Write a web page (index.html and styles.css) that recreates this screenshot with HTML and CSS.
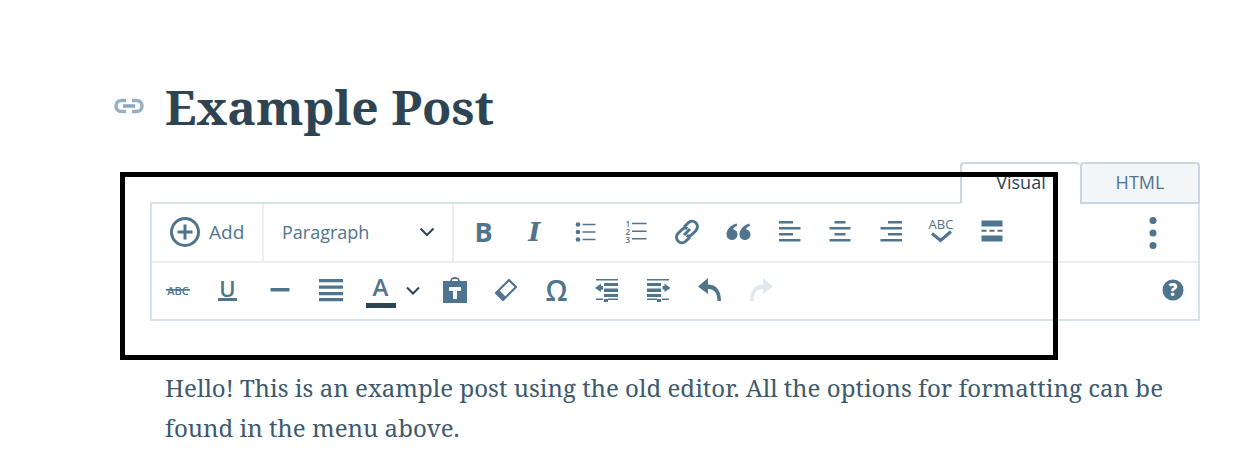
FILE: index.html
```html
<!DOCTYPE html>
<html lang="en">
<head>
<meta charset="utf-8">
<title>Example Post</title>
<link rel="stylesheet" href="styles.css">
</head>
<body>
<main class="page">
  <div class="title-row">
    <svg class="permalink" viewBox="0 0 32 24" width="32" height="24"><path d="M10 12h12" fill="none" stroke="#87a6bc" stroke-width="3.500"/><path d="M13 6.500H8.500a5.500 5.500 0 0 0 0 11H13M19 6.500h4.500a5.500 5.500 0 0 1 0 11H19" fill="none" stroke="#94b0c5" stroke-width="3.500"/></svg>
    <h1 class="title">Example Post</h1>
  </div>
  <div class="tabs">
    <div class="tab tab-active">Visual</div>
    <div class="tab tab-html">HTML</div>
  </div>
  <div class="editor">
    <div class="row row-first">
      <div class="add">
        <svg viewBox="0 0 32 32" width="32" height="32"><circle cx="16" cy="16" r="13.500" fill="none" stroke="#4f748e" stroke-width="3"/><path d="M16 8.500v15M8.500 16h15" stroke="#4f748e" stroke-width="3"/></svg>
        <span>Add</span>
      </div>
      <div class="format">
        <span>Paragraph</span>
        <svg class="chev-dark" viewBox="0 0 16 10" width="16" height="10"><path d="M1.500 1.500 8 8l6.500-6.500" fill="none" stroke="#2e4453" stroke-width="2"/></svg>
      </div>
      <div class="icons">
        <div class="btn"><span class="glyph-b">B</span></div>
        <div class="btn"><span class="glyph-i">I</span></div>
        <div class="btn"><svg class="ico" viewBox="0 0 24 24"><circle cx="5" cy="4.500" r="2.300"/><circle cx="5" cy="12" r="2.300"/><circle cx="5" cy="19.500" r="2.300"/><path d="M9.500 3.800h13v1.400h-13zM9.500 11.300h13v1.400h-13zM9.500 18.800h13v1.400h-13z"/></svg></div>
        <div class="btn"><svg class="ico ico-ol" viewBox="0 0 24 26"><text class="nums" x="1.500" y="7.500">1</text><text class="nums" x="1.500" y="15.500">2</text><text class="nums" x="1.500" y="23.500">3</text><path d="M8 3.800h14.500v1.400H8zM8 11.500h14.500v1.400H8zM8 19h14.500v1.400H8z"/></svg></div>
        <div class="btn"><svg class="ico ico-big" viewBox="0 0 26 26"><path d="M10 16 16 10M10 8l4-4a5.300 5.300 0 0 1 8 7.500l-4 4a5 5 0 0 1-5.500 1M16 18l-4 4a5.300 5.300 0 0 1-8-7.500l4-4a5 5 0 0 1 5.500-1" fill="none" stroke="#4f748e" stroke-width="3"/></svg></div>
        <div class="btn"><svg class="ico" viewBox="0 0 24 24"><path d="M10.500 3.500C4.500 5 .500 9.500 .500 14.500a5.500 5.500 0 1 0 6.500-5.300c.5-1.400 2-2.700 4-3.300zM23.500 3.500c-6 1.500-10 6-10 11a5.500 5.500 0 1 0 6.500-5.300c.5-1.400 2-2.700 4-3.300z"/></svg></div>
        <div class="btn"><svg class="ico" viewBox="0 0 24 24"><path d="M2 1h14v2.500H2zM2 7h21.500v2.500H2zM2 13h14v2.500H2zM2 19h21.500v2.500H2z"/></svg></div>
        <div class="btn"><svg class="ico" viewBox="0 0 24 24"><path d="M6.500 1h11v2.500h-11zM1.500 7h21v2.500h-21zM6.500 13h11v2.500h-11zM1.500 19h21v2.500h-21z"/></svg></div>
        <div class="btn"><svg class="ico" viewBox="0 0 24 24"><path d="M9 1h14v2.500H9zM1.500 7H23v2.500H1.500zM9 13h14v2.500H9zM1.500 19H23v2.500H1.500z"/></svg></div>
        <div class="btn"><svg class="ico ico-big" viewBox="0 0 26 26"><text class="abc" x="13" y="10" text-anchor="middle">ABC</text><path d="m4 14.500 8.500 7L23 12.500" fill="none" stroke="#4f748e" stroke-width="3"/></svg></div>
        <div class="btn"><svg class="ico" viewBox="0 0 24 24"><path d="M1.500 .500h21v6h-21zM1.500 15.500h21v6h-21zM1.500 9.800h5v2h-5zM9.500 9.800h5v2h-5zM17.500 9.800h5v2h-5z"/></svg></div>
      </div>
      <div class="btn btn-more"><svg class="ico" viewBox="0 0 24 32"><circle cx="12" cy="3.500" r="3.500"/><circle cx="12" cy="16" r="3.500"/><circle cx="12" cy="28.500" r="3.500"/></svg></div>
    </div>
    <div class="row row-second">
      <div class="btn"><svg class="ico ico-big" viewBox="0 0 26 24"><text class="abc-strike" x="13" y="16.500" text-anchor="middle">ABC</text><path d="M1 11h24v1.700H1z"/></svg></div>
      <div class="btn btn-under"><span class="glyph-u">U</span></div>
      <div class="btn"><svg class="ico" viewBox="0 0 24 24"><path d="M2.500 10h19v3.500h-19z"/></svg></div>
      <div class="btn"><svg class="ico ico-big" viewBox="0 0 26 26"><path d="M1 2h24v3.300H1zM1 8.500h24v3.300H1zM1 15h24v3.300H1zM1 21h24v3.300H1z"/></svg></div>
      <div class="btn btn-color"><span class="glyph-a">A</span></div>
      <div class="chev-slot"><svg viewBox="0 0 14 9" width="14" height="9"><path d="M1 1.500 7 7.500l6-6" fill="none" stroke="#2e4453" stroke-width="2"/></svg></div>
      <div class="btn"><svg class="ico ico-big" viewBox="0 0 26 26"><path fill-rule="evenodd" d="M1 4h7l1-2.500Q10 0 13 0t4 1.500L18 4h7v22H1zM10 4h6v-1.500Q15 2 13 2t-3 .500zM7 10v4h4v8h4v-8h4v-4z"/></svg></div>
      <div class="btn"><svg class="ico ico-big" viewBox="0 0 26 26"><path d="M16 3 23 10 10 23 3 16z" fill="none" stroke="#4f748e" stroke-width="2.200" stroke-linejoin="round"/><path d="M3 16 6 13 13 20 10 23z"/></svg></div>
      <div class="btn"><span class="glyph-o">Ω</span></div>
      <div class="btn"><svg class="ico" viewBox="0 0 24 24"><path transform="translate(-2 0)" d="M2 1h22v1.500H2zM10 5h14v3H10zM10 10.500h14V14H10zM10 16h14v3H10zM2 20.500h7v1.500H2zM14 20.500h10v1.500H14zM10 21h4v3h-4zM1 10l6-4.500V8h2v3.500H7V14z"/></svg></div>
      <div class="btn"><svg class="ico" viewBox="0 0 24 24"><path d="M0 1h22v1.500H0zM0 5h14v3H0zM0 10.500h14V14H0zM0 16h14v3H0zM15 20.500h7v1.500h-7zM0 20.500h10v1.500H0zM10 21h4v3h-4zM23.500 10l-6-4.500V8h-2v3.500h2V14z"/></svg></div>
      <div class="btn"><svg class="ico ico-big" viewBox="0 0 26 26"><path d="M11 1 1 9.500 11 17v-5c6.500 0 9.500 4 9.500 12h3.500C24 13 19 7.500 11 7.500z"/></svg></div>
      <div class="btn"><svg class="ico ico-big ico-off" viewBox="0 0 26 26"><path d="M15 1 25 9.500 15 17v-5C8.500 12 5.500 16 5.500 24H2C2 13 7 7.500 15 7.500z"/></svg></div>
      <div class="btn btn-help"><svg class="ico" viewBox="0 0 24 24"><circle cx="12" cy="12" r="10.500"/><text class="help" x="12" y="18" text-anchor="middle">?</text></svg></div>
    </div>
  </div>
  <div class="content">
    <p>Hello! This is an example post using the old editor. All the options for formatting can be found in the menu above.</p>
  </div>
</main>
<div class="highlight"></div>
</body>
</html>
```
FILE: styles.css
```css
* { box-sizing: border-box; }
html, body { margin: 0; padding: 0; background: #fff; }
body { width: 1248px; height: 471px; overflow: hidden; position: relative; font-family: "Open Sans", "Noto Sans", sans-serif; }
svg { overflow: visible; }
.page { width: 1050px; margin-left: 150px; padding-top: 76px; }
.title-row { position: relative; height: 60px; padding-left: 15px; }
.permalink { position: absolute; left: -37px; top: 18px; }
.title { margin: 0; padding-top: 1px; font-family: "Noto Serif", "DejaVu Serif", serif; font-weight: 700; font-size: 48px; line-height: 60px; color: #2e4453; white-space: nowrap; }
.tabs { display: flex; justify-content: flex-end; margin-top: 26px; height: 42px; position: relative; z-index: 1; margin-bottom: -2px; }
.tab { height: 42px; border: 2px solid #c8d7e1; border-radius: 4px 4px 0 0; display: flex; align-items: center; justify-content: center; font-size: 18px; color: #2e4453; padding-bottom: 2px; }
.tab-active { width: 120px; background: #fff; border-bottom-color: #fff; border-right: 0; }
.tab-html { width: 120px; background: #f3f6f8; color: #4f748e; }
.editor { border: 2px solid #d8e2e9; height: 119px; }
.row { display: flex; align-items: center; }
.row-first { border-bottom: 2px solid #e9eff3; height: 59px; }
.row-second { height: 56px; padding-bottom: 2px; }
.add { width: 112px; height: 100%; display: flex; align-items: center; gap: 8px; padding: 0 0 2px 17px; border-right: 2px solid #e9eff3; color: #4f748e; font-size: 19px; }
.format { width: 190px; height: 100%; display: flex; align-items: center; justify-content: space-between; padding: 0 17px 2px 18px; border-right: 2px solid #e9eff3; color: #4f748e; font-size: 18px; }
.icons { display: flex; padding: 0 0 2px 4px; }
.btn { width: 50.9px; height: 36px; display: flex; align-items: center; justify-content: center; flex: none; }
.row-second .btn { width: 51px; }
.btn-under { padding-right: 2px; }
.btn-more { margin-left: auto; margin-right: 20px; }
.row-second .btn-help { margin-left: auto; }
.ico { width: 24px; height: 24px; fill: #4f748e; }
.btn-more .ico { width: 24px; height: 32px; }
.ico-ol { height: 26px; }
.ico-big { width: 26px; height: 26px; }
.ico-off { fill: #e1e9ef; }
.glyph-b { font: 700 27px/1 "Open Sans", sans-serif; color: #4f748e; }
.glyph-i { font: italic 700 26px/1 "DejaVu Serif", serif; color: #4f748e; }
.glyph-u { display: block; height: 22px; padding: 0 1px; font: 600 22px/18px "Open Sans", sans-serif; color: #4f748e; border-bottom: 3px solid #4f748e; }
.glyph-o { font: 600 28px/1 "Open Sans", sans-serif; color: #4f748e; }
.btn-color { height: 38px; padding-right: 2px; }
.glyph-a { width: 30px; height: 36px; display: flex; align-items: flex-start; justify-content: center; font: 600 24px/30px "Open Sans", sans-serif; color: #4f748e; border-bottom: 5px solid #2e4453; }
.chev-slot { width: 23px; flex: none; display: flex; justify-content: flex-start; margin-left: -1px; }
.nums { font: 600 8px "Open Sans", sans-serif; }
.abc { font: 400 13px "Open Sans", sans-serif; fill: #4f748e; }
.abc-strike { font: 600 11px "Open Sans", sans-serif; fill: #4f748e; }
.help { font: 800 17px "Open Sans", sans-serif; fill: #fff; }
.content { padding-left: 15px; margin-top: 47px; }
.content p { margin: 0; font-family: "Noto Serif", "DejaVu Serif", serif; font-size: 24px; letter-spacing: 0.03px; line-height: 40px; color: #3d596d; }
.highlight { position: absolute; z-index: 2; left: 120px; top: 172px; width: 938px; height: 188px; border: 5px solid #000; }
```
